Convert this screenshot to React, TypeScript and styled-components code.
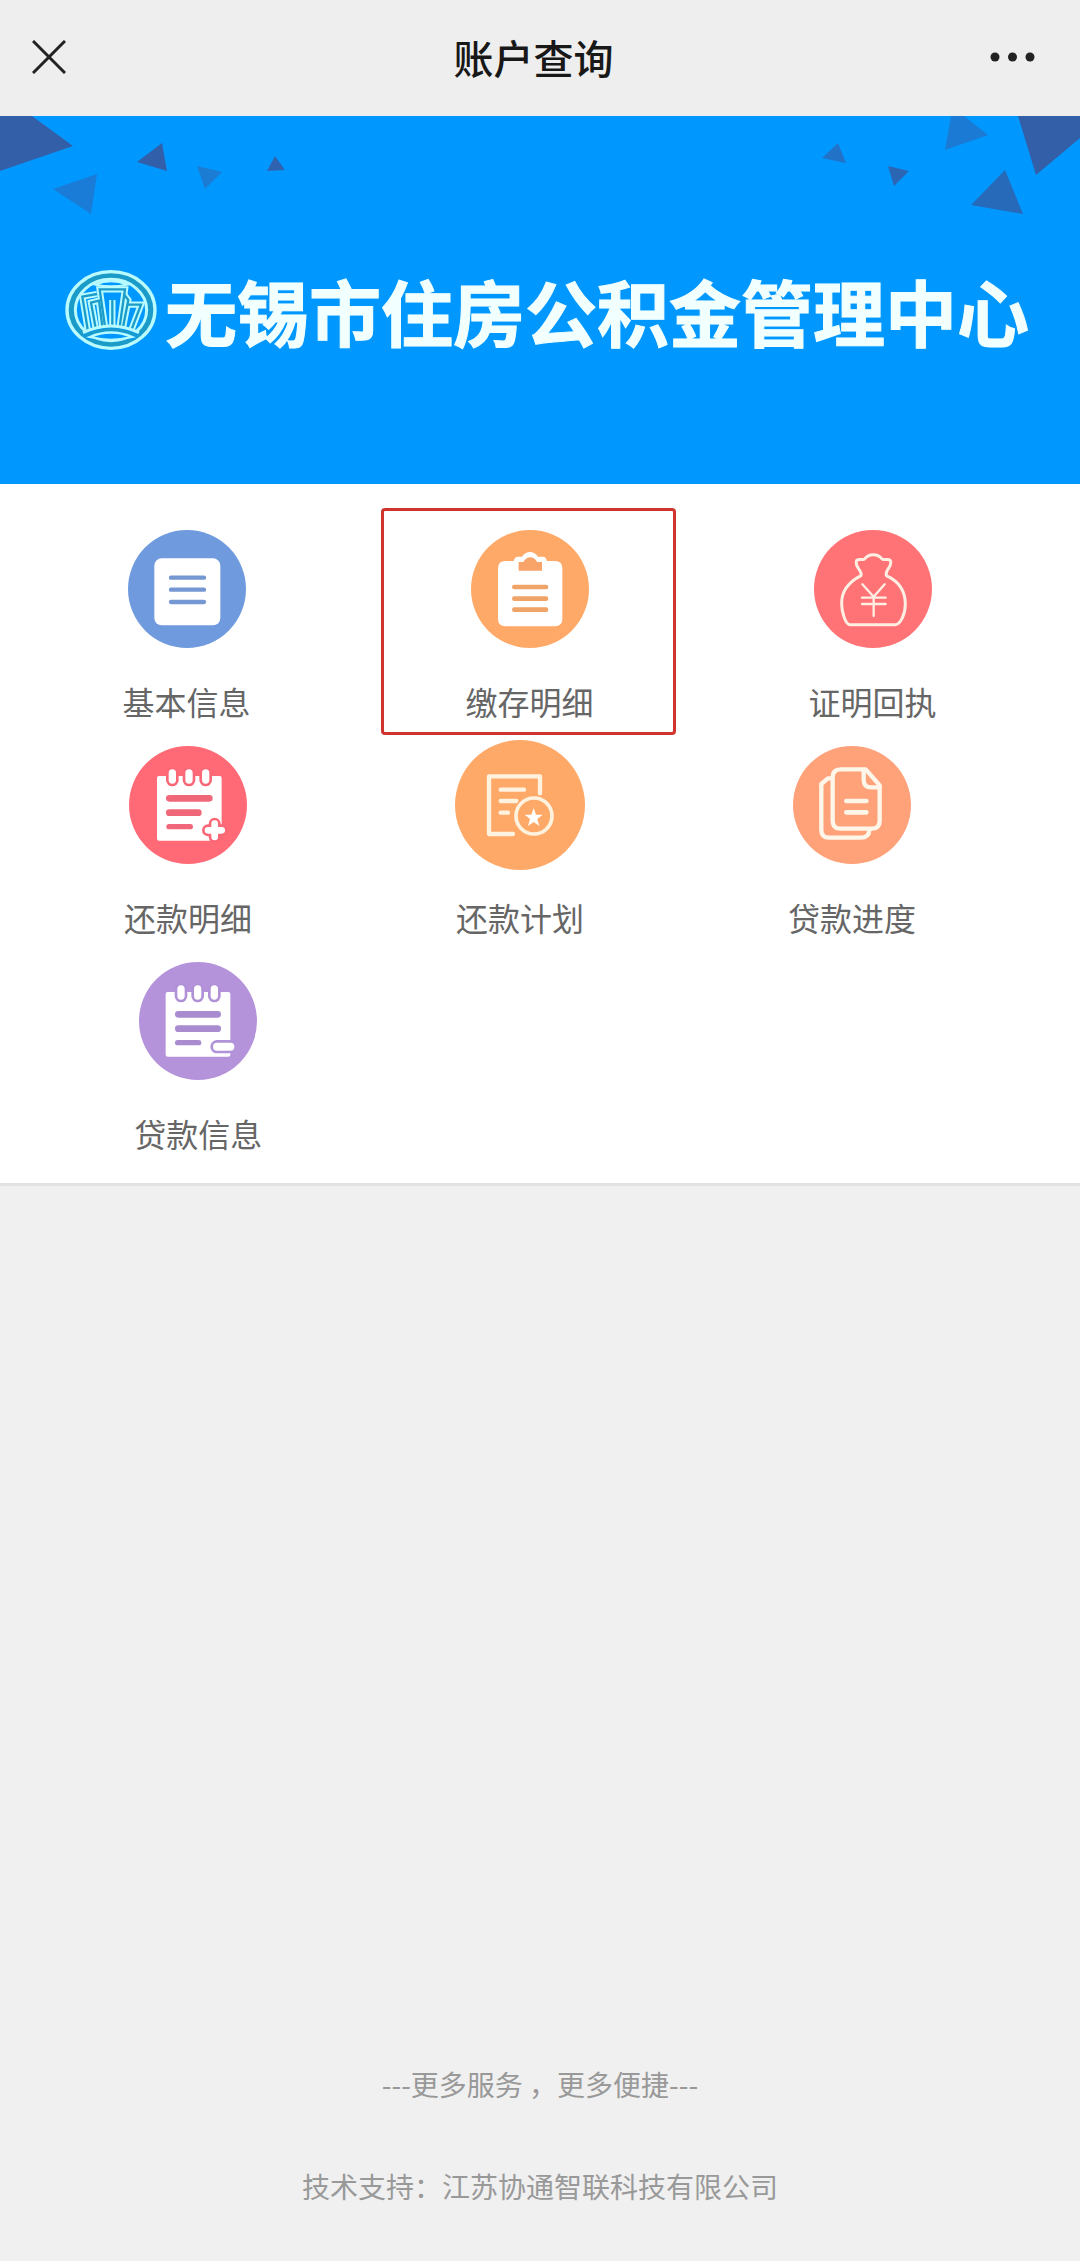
import React from 'react';
import styled, { createGlobalStyle } from 'styled-components';

const GlobalStyle = createGlobalStyle`
  * { box-sizing: border-box; }
  body {
    margin: 0;
    background: #f0f0f0;
    font-family: "Noto Sans CJK SC", "Noto Sans", sans-serif;
  }
`;

const Page = styled.div`
  display: flex;
  flex-direction: column;
  min-height: 100vh;
`;

const TopBar = styled.header`
  display: grid;
  grid-template-columns: 1fr auto 1fr;
  align-items: center;
  height: 116px;
  padding: 0 45px 2px 32px;
  background: #eeeeee;
`;

const Title = styled.h1`
  margin: 0;
  font-size: 40px;
  line-height: 60px;
  font-weight: 500;
  color: #181818;
`;

const BarButton = styled.button<{ $end?: boolean }>`
  display: flex;
  justify-self: ${(p) => (p.$end ? 'end' : 'start')};
  padding: 0;
  border: 0;
  background: none;
  color: #222;
  cursor: pointer;
`;

const Banner = styled.section`
  position: relative;
  display: flex;
  align-items: center;
  justify-content: center;
  gap: 8px;
  padding: 154px 51px 134px 65px;
  background: #0098ff;
  overflow: hidden;
`;

const Confetti = styled.svg<{ $side: 'left' | 'right' }>`
  position: absolute;
  top: 0;
  ${(p) => p.$side}: 0;
`;

const BannerName = styled.h2`
  margin: 0;
  font-size: 72px;
  line-height: 76px;
  font-weight: 700;
  color: #f2ffff;
  -webkit-text-stroke: 1px #f2ffff;
  white-space: nowrap;
`;

const Menu = styled.nav`
  display: flex;
  flex-direction: column;
  gap: 15px;
  padding: 40px 0 26px;
  background: #fff;
  border-bottom: 3px solid #e2e2e2;
`;

const MenuRow = styled.div<{ $left: number; $right: number }>`
  display: grid;
  grid-template-columns: repeat(3, 1fr);
  padding: 0 ${(p) => p.$right}px 0 ${(p) => p.$left}px;
`;

const MenuItem = styled.a<{ $marked?: boolean }>`
  position: relative;
  display: flex;
  flex-direction: column;
  align-items: center;
  gap: 24px;
  color: #666;
  text-decoration: none;

  &::after {
    content: "";
    display: ${(p) => (p.$marked ? 'block' : 'none')};
    position: absolute;
    inset: -16px 25px -10px 23px;
    border: 3px solid #cf352e;
    border-radius: 4px;
  }
`;

const IconSlot = styled.span`
  display: flex;
  align-items: center;
  justify-content: center;
  height: 130px;
`;

const Label = styled.span`
  font-size: 32px;
  line-height: 47px;
`;

const Footer = styled.footer`
  display: flex;
  flex-direction: column;
  align-items: center;
  gap: 60px;
  margin-top: auto;
  padding: 60px 0 54px;
`;

const FooterLine = styled.p`
  margin: 0;
  font-size: 28px;
  line-height: 42px;
  color: #999;
`;

const towers = [
  'M144 238L128 140L172 132',
  'M168 234L154 158L178 152L188 230',
  'M196 230L180 118H256L240 230',
  'M218 228V150',
  'M250 232L266 150L252 132',
  'M276 238L304 164H262',
];

const Emblem = () => (
  <svg width="92" height="80" viewBox="76 60 276 240" fill="none" aria-hidden="true">
    <ellipse cx="214" cy="180" rx="121" ry="105" stroke="#1a9bc8" strokeWidth="20" />
    <ellipse cx="214" cy="180" rx="132" ry="115" stroke="#b9fbff" strokeWidth="10" />
    <ellipse cx="214" cy="180" rx="107" ry="92" stroke="#b9fbff" strokeWidth="9" />
    <path d="M168 104Q214 84 262 104Q214 114 168 104Z" stroke="#b9fbff" strokeWidth="6" />
    {towers.map((d) => (
      <path key={d} d={d} stroke="#b9fbff" strokeWidth="19" />
    ))}
    {towers.map((d) => (
      <path key={d} d={d} stroke="#1a9bc8" strokeWidth="7" />
    ))}
    <path d="M128 246Q214 206 300 246L284 268H144Z" fill="#0098ff" />
    <path d="M130 248Q214 208 298 248" stroke="#b9fbff" strokeWidth="9" />
    <path d="M138 256Q214 222 290 256" stroke="#1a9bc8" strokeWidth="9" />
    <path d="M150 261Q214 234 278 261Q214 278 150 261Z" stroke="#b9fbff" strokeWidth="7" />
  </svg>
);

const InfoIcon = () => (
  <svg width="118" height="118" viewBox="84 89 354 354" fill="none" aria-hidden="true">
    <circle cx="261" cy="266" r="177" fill="#6f9ade" />
    <rect x="163" y="174" width="198" height="201" rx="22" fill="#fff" />
    <path d="M213 232H312M213 268H312M213 305H312" stroke="#7598d2" strokeWidth="13" strokeLinecap="round" />
  </svg>
);

const ClipboardIcon = () => (
  <svg width="118" height="118" viewBox="309 92 354 354" fill="none" aria-hidden="true">
    <circle cx="486" cy="269" r="177" fill="#ffa968" />
    <path
      d="M412 185H437Q440 172 450 172H462Q472 158 486 158T510 172H524Q534 172 537 185H561Q583 185 583 207V359Q583 381 561 381H412Q390 381 390 359V207Q390 185 412 185Z"
      fill="#fff"
    />
    <path d="M452 188H466Q474 174 487 174T507 188H522V214H452Z" fill="#f8a468" />
    <path d="M439 263H534M439 298H534M439 331H534" stroke="#f0a468" strokeWidth="14" strokeLinecap="round" />
  </svg>
);

const MoneyBagIcon = () => (
  <svg width="118" height="118" viewBox="164 93 354 354" fill="none" aria-hidden="true">
    <circle cx="341" cy="270" r="177" fill="#ff7376" />
    <g stroke="#ffeee2" strokeLinejoin="round" strokeLinecap="round">
      <path
        d="M305 230C310 214 284 205 292 184C299 178 308 185 316 180C328 163 356 163 368 180C376 185 385 178 393 184C401 203 376 212 381 230C420 248 438 280 438 315C438 346 423 377 408 377H272C259 377 247 340 247 315C246 280 266 250 305 230Z"
        strokeWidth="9"
      />
      <path d="M309 256L343 293L376 256M343 293V351M308 296H379M308 315H379" strokeWidth="7" />
    </g>
  </svg>
);

const StarDocIcon = () => (
  <svg width="130" height="130" viewBox="253 718 390 390" fill="none" aria-hidden="true">
    <circle cx="448" cy="913" r="195" fill="#ffa968" />
    <g stroke="#fff3df" strokeWidth="13" strokeLinecap="round" strokeLinejoin="round">
      <path d="M508 878V827H355V1000H427" />
      <path d="M390 867H460M390 901H437M390 936H412" />
      <circle cx="490" cy="946" r="54" strokeWidth="11" />
    </g>
    <path d="M489 922L496 942H516L500 955L506 976L489 964L472 976L478 955L462 942H482Z" fill="#fff" />
  </svg>
);

const PagesIcon = () => (
  <svg width="118" height="118" viewBox="102 744 354 354" fill="none" aria-hidden="true">
    <circle cx="279" cy="921" r="177" fill="#ffa27a" />
    <g stroke="#fff6ea" strokeWidth="13" strokeLinecap="round" strokeLinejoin="round">
      <path d="M215 841H207L187 858V996Q187 1019 210 1019H306Q329 1019 331 998" />
      <path d="M245 814H320L362 862V968Q362 992 338 992H245Q221 992 221 968V838Q221 814 245 814Z" />
      <path d="M314 816V845Q314 868 337 868H362" />
      <path d="M262 909H322M262 943H322" strokeWidth="14" />
    </g>
  </svg>
);

/* Calendar sheet with three binder rings, shared by two entries. */
const Sheet = ({ color, corner }: { color: string; corner: string }) => (
  <>
    <path d={`M183 137H365Q371 137 371 143${corner}H183Q177 331 177 325V143Q177 137 183 137Z`} fill="#fff" />
    {[223, 273, 323].map((x) => (
      <g key={x}>
        <rect x={x - 19} y="112" width="38" height="56" rx="19" fill={color} />
        <rect x={x - 11} y="117" width="22" height="43" rx="11" fill="#fff" />
      </g>
    ))}
  </>
);

const SheetPlusIcon = () => (
  <svg width="118" height="118" viewBox="93 47 354 354" fill="none" aria-hidden="true">
    <circle cx="270" cy="224" r="177" fill="#ff6a76" />
    <Sheet color="#fa6878" corner="V290L335 331" />
    <g stroke="#f0677a" strokeLinecap="round">
      <path d="M214 204H334" strokeWidth="20" />
      <path d="M214 247H301" strokeWidth="20" />
      <path d="M213 289H277" strokeWidth="16" />
    </g>
    <path d="M350 280V320M330 300H371" stroke="#fa6878" strokeWidth="36" strokeLinecap="round" />
    <path d="M350 280V320M330 300H371" stroke="#fff" strokeWidth="20" strokeLinecap="round" />
  </svg>
);

const SheetMinusIcon = () => (
  <svg width="118" height="118" viewBox="97 47 354 354" fill="none" aria-hidden="true">
    <circle cx="274" cy="224" r="177" fill="#b493db" />
    <Sheet color="#b090d6" corner="V325Q371 331 365 331" />
    <g stroke="#a98bd0" strokeLinecap="round">
      <path d="M215 204H333" strokeWidth="20" />
      <path d="M215 247H333" strokeWidth="20" />
      <path d="M213 289H276" strokeWidth="16" />
    </g>
    <path d="M376 281H331A20 20 0 0 0 331 321H376Z" fill="#b093d8" />
    <rect x="319" y="289" width="64" height="24" rx="12" fill="#fff" />
  </svg>
);

type Entry = { label: string; Icon: React.FC; marked?: boolean };
type Row = { left: number; right: number; entries: Entry[] };

const rows: Row[] = [
  {
    left: 15,
    right: 36,
    entries: [
      { label: '基本信息', Icon: InfoIcon },
      { label: '缴存明细', Icon: ClipboardIcon, marked: true },
      { label: '证明回执', Icon: MoneyBagIcon },
    ],
  },
  {
    left: 22,
    right: 62,
    entries: [
      { label: '还款明细', Icon: SheetPlusIcon },
      { label: '还款计划', Icon: StarDocIcon },
      { label: '贷款进度', Icon: PagesIcon },
    ],
  },
  {
    left: 25,
    right: 16,
    entries: [{ label: '贷款信息', Icon: SheetMinusIcon }],
  },
];

export default function App() {
  return (
    <Page>
      <GlobalStyle />
      <TopBar>
        <BarButton aria-label="关闭">
          <svg width="34" height="34" viewBox="0 0 34 34" fill="none" stroke="currentColor" strokeWidth="3">
            <path d="M1 1L33 33M33 1L1 33" />
          </svg>
        </BarButton>
        <Title>账户查询</Title>
        <BarButton $end aria-label="更多">
          <svg width="45" height="10" viewBox="0 0 45 10" fill="currentColor">
            <circle cx="5" cy="5" r="4.5" />
            <circle cx="22.5" cy="5" r="4.5" />
            <circle cx="40" cy="5" r="4.5" />
          </svg>
        </BarButton>
      </TopBar>

      <Banner>
        <Confetti $side="left" width="300" height="110" viewBox="0 0 300 110" aria-hidden="true">
          <path d="M0 0H32L73 30L0 55Z" fill="#325fa7" />
          <path d="M53 73L97 58L91 98Z" fill="#1a7cd6" />
          <path d="M137 46L162 27L167 55Z" fill="#325fa9" />
          <path d="M197 50L222 56L205 73Z" fill="#1c7bd2" />
          <path d="M275 40L285 54L267 55Z" fill="#2f63b0" />
        </Confetti>
        <Confetti $side="right" width="280" height="110" viewBox="800 0 280 110" aria-hidden="true">
          <path d="M822 42L838 27L846 47Z" fill="#2272c8" />
          <path d="M888 50L909 55L894 70Z" fill="#2b66b4" />
          <path d="M951 0H964L988 19L945 34Z" fill="#1b7ad4" />
          <path d="M1018 0H1080V22L1036 59Z" fill="#325fa7" />
          <path d="M971 89L1005 54L1023 98Z" fill="#286aba" />
        </Confetti>
        <Emblem />
        <BannerName>无锡市住房公积金管理中心</BannerName>
      </Banner>

      <Menu>
        {rows.map((row) => (
          <MenuRow key={row.entries[0].label} $left={row.left} $right={row.right}>
            {row.entries.map(({ label, Icon, marked }) => (
              <MenuItem key={label} href="#" $marked={marked}>
                <IconSlot>
                  <Icon />
                </IconSlot>
                <Label>{label}</Label>
              </MenuItem>
            ))}
          </MenuRow>
        ))}
      </Menu>

      <Footer>
        <FooterLine>---更多服务 ，更多便捷---</FooterLine>
        <FooterLine>技术支持：江苏协通智联科技有限公司</FooterLine>
      </Footer>
    </Page>
  );
}
